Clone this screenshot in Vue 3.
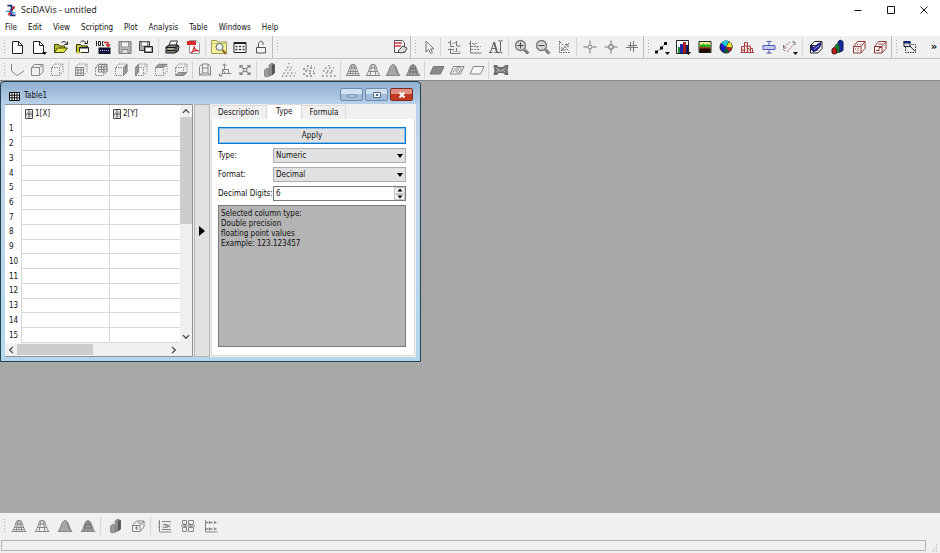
<script setup>
import { ref } from 'vue'

const menus = ['File', 'Edit', 'View', 'Scripting', 'Plot', 'Analysis', 'Table', 'Windows', 'Help']

const dash = 'stroke-dasharray="1.5 1"'
const cubeBack = `<path ${dash} d="M2.500 5.500h8v8h-8zM2.500 5.500l3-3.500h8.500v7.500l-3.500 4M10.500 5.500l3.500-3.500"/>`
const page = '<path fill="#fff" stroke="#222" d="M2.500 2.500h6l4 4v8h-10z"/><path stroke="#222" d="M8.500 2.500v4h4"/>'
const bell = 'M1 13.500C4 11 4 3 8 2.500c4 .5 4 8.500 7 11z'
const mesh = '<path d="M1 13.500C4 11 4.500 3 6.500 2.500h3C11.500 3 12 11 15 13.500M5 13.500L7 2.500M11 13.500L9 2.500M4.500 6h7.500M3.500 9.500h9.500M1 13.500h14"/>'
const lens = '<circle cx="6.500" cy="6.500" r="5" fill="#d4d4d4" stroke="#777" stroke-width="1.300"/><path stroke="#888" stroke-width="3" d="M10.500 10.500l4 4"/><path stroke="#555" d="M10 11.500l3.500 3.500"/>'
const caret = '<path fill="#111" stroke="none" d="M11 13h5l-2.500 3z"/>'
const redCube = '<path fill="#fff6f4" stroke="#8b3a3a" d="M2.500 7.500l4-5h7.500v7l-4 4.500h-7.500zM2.500 7.500h7.500v6M10 7.500l4-5"/>'
const lock3d = '<path fill="#999" stroke="#666" stroke-width=".6"'

const icons = {
  app: '<path stroke="#c03028" stroke-width="3" d="M4 13c3 0 3-9 8-9"/><path stroke="#1b2d7a" stroke-width="2" d="M3 2h6M8 2v11M6 14h7"/><path stroke="#3b86d8" stroke-width="1.500" d="M1 9h5l3 2h4"/>',
  page,
  pageMenu: page + caret,
  open: '<path fill="#b8b832" stroke="#444400" d="M1.500 13.500v-8h4l1 1.500h5v2"/><path fill="#e4e44c" stroke="#444400" d="M1.500 13.500l3-4.500h10l-3.500 4.500z"/><path stroke="#222" d="M8.500 4c1-2 4-2 5 .5M14.500 2.500v3h-3"/>',
  openProject: '<path stroke="#222" d="M6.500 3c1.500-1.500 4-1.500 5.500 1M13.500 1.500v3h-3"/><path fill="#c8c83c" stroke="#333300" d="M2.500 13.500v-8h4l1 1.500h6v2"/><path fill="#fff" stroke="#222" d="M5.500 13.500v-5h9v5z"/><path stroke="#222" d="M5 9h10"/><path stroke="#c8c83c" stroke-width="1.500" d="M2 13.500h5"/>',
  importAscii: '<path stroke="#222" d="M1.500 2v5M3.500 2.500h2v4h-2zM8.500 2.500h-1v4h1.500"/><path stroke="#c43030" stroke-width="1.500" d="M9 3.500h4v3.500M11 5.500l2 2 2-2"/><rect x="4" y="9" width="11" height="5.500" fill="#15154c" stroke="#111"/><path stroke="#aab" stroke-dasharray="1 1" d="M5 11.500h9"/>',
  save: '<path fill="#b5b5b5" stroke="#777" d="M2 2.500h12v12H2z"/><path fill="#f3f3f3" stroke="#999" d="M4.500 3h7v5h-7z"/><path fill="#ddd" stroke="#888" d="M5 10.500h6v4H5z"/>',
  saveProject: '<path fill="#aaa" stroke="#444" d="M1.500 2.500h10v9h-10z"/><path fill="#fff" stroke="#888" d="M3.500 3h6v4h-6z"/><path fill="#999" stroke="#222" d="M6.500 7.500h8v6h-8z"/><path fill="#fff" stroke="none" d="M8 9h5v3H8z"/>',
  print: '<path fill="#fff" stroke="#333" d="M5 7l1.500-5h7l-2 5z"/><path fill="#888" stroke="#111" d="M2 8l3-2h9l1 2-1 4-3 2H2z"/><path stroke="#111" d="M2 8.500h9l3-2M3 11.500h8M12 8v5"/><path stroke="#d6d6a0" d="M4 10h5"/>',
  pdf: '<path fill="#fff" stroke="#999" d="M4.500 1.500h7l3 3v10h-10z"/><path fill="#d92b2b" stroke="none" d="M2 2h9v4H2z"/><path stroke="#d02828" stroke-width="1.200" d="M6 14c2-2 3.500-5 3-7 0 3 2 4.500 5 5-3-1-6 0-8 2z"/>',
  explorer: '<path fill="#f5f39d" stroke="#9c9c4c" d="M.5 14.500v-13h5l1 1.500h9v11.500z"/><path stroke="#c9c870" d="M.5 4.500h15"/><circle cx="8.500" cy="8" r="3.500" fill="#e8f2f4" stroke="#666"/><path stroke="#886622" stroke-width="2" d="M11.500 11l3.500 4"/>',
  results: '<path fill="#fff" stroke="#222" d="M2 3.500h12v10H2z"/><path stroke="#222" stroke-width="2" d="M2 4h12"/><path stroke="#333" stroke-width="1.500" stroke-dasharray="2 1.500" d="M3.500 7.500h9.500M3.500 10.500h9.500"/>',
  lock: '<path fill="#f2f2f2" stroke="#555" d="M3.500 8.500h9v5.500h-9zM5.500 8.500V4.500q2-4 4.500-1v2.500"/>',
  note: '<path fill="#fff" stroke="#555" d="M2.500 1.500h8l2 2v10h-10z"/><path stroke="#cc3c48" stroke-width="1.500" d="M2 4h8M2 7h7"/><path fill="#ddd" stroke="#444" d="M6 12l5-5 4 2-2 4-5 1z"/>',
  cursor: '<path fill="#eee" stroke="#777" d="M5 2v11l2.500-2.500 2 4 2-1-2-3.500h3.500z"/>',
  cross1: '<path stroke="#777" d="M4.500 1.500v6M2 3.500h3M4 7.500h4M4.500 9.500v5h10M10.500 2v5h4M9 3.500h2M10.500 9v3M2 10.500h6"/><path stroke="#999" stroke-dasharray="1.500 1" d="M7 12.500h8M6 4.500h3"/>',
  cross2: '<path stroke="#777" d="M3.500 2v12h11"/><path stroke="#888" stroke-dasharray="2 1" d="M2 4.500h9M4 7.500h10M4 10.500h9M7 5l5 6"/>',
  textCursor: '<path stroke="#666" d="M1 13.500h3.500M6.500 13.500H11M2.500 13L6 3M6 3l3 10.500M4 9.500h4"/><path stroke="#666" stroke-width="1.800" d="M6 3l3 10"/><path stroke="#666" d="M10.500 1.500q2 0 2 1.500v9.500q0 1.500 2 1.500M12.500 3q0-1.500 2-1.500M12.500 12.500q0 1.500-2 1.500"/>',
  zoomIn: lens + '<path stroke="#444" d="M3.500 6.500h6M6.500 3.500v6"/>',
  zoomOut: lens + '<path stroke="#444" d="M3.500 6.500h6"/>',
  rescale: '<path stroke="#666" stroke-dasharray="1.500 1" d="M3.500 2v11.500h11M4 3l9 9M13 4l-8 8"/><path stroke="#777" d="M9 5.500h3v3M6 8v3h4"/>',
  target: '<path stroke="#777" d="M8 1.500v4M8 10.500v4M1.500 8h4M10.500 8h4"/><circle cx="8" cy="8" r="2" stroke="#777"/>',
  targetBox: '<path stroke="#777" d="M8 1.500v5M8 9.500v5M1.500 8h5M9.500 8h5M6 6h4v4H6z"/>',
  cursors: '<path stroke="#777" d="M6.500 3v9M9.500 2v11M2 8.500h12M4 6.500h9"/>',
  line: '<path stroke="#444" stroke-dasharray="2 1" d="M3 13L12 4"/><path fill="#111" stroke="none" d="M1 11.500h3v3H1zM6 7.500h3v3H6zM10 3h3v3h-3z"/>' + caret,
  bars: '<path fill="#fff" stroke="#222" d="M1.500 1.500h12v13h-12z"/><path fill="#178c2a" stroke="none" d="M3 8h2v6H3z"/><path fill="#2026aa" stroke="none" d="M5 5h3v9H5z"/><path fill="#a32020" stroke="none" d="M8 3h3v11H8z"/><path fill="#18185c" stroke="none" d="M11 6h2v8h-2z"/>' + caret,
  area: '<path fill="#f5ee90" stroke="#222" d="M2 2.500h12v11H2z"/><path fill="#17b325" stroke="none" d="M2.500 5l2 1 2-1.500 2 1.500 2-1 3 1v4h-11z"/><path fill="#b33a14" stroke="none" d="M2.500 8l2-1 2 1.500 2-1 2 1 3-1v3h-11z"/><path fill="#210606" stroke="none" d="M2.500 9.500h11v4h-11z"/>',
  pie: '<circle cx="8" cy="8" r="6" fill="#1a22c0" stroke="#111"/><path fill="#20c8d8" stroke="none" d="M8 8L3.500 4A6 6 0 0 1 11 2.500z"/><path fill="#eeee24" stroke="#222" stroke-width=".5" d="M8 8l3-5.500A6 6 0 0 1 14 9z"/><path fill="#b81e1e" stroke="none" d="M8 8l6 1a6 6 0 0 1-3 4z"/><path fill="#125c1c" stroke="none" d="M8 8l3 5a6 6 0 0 1-5 .5z"/>',
  vectors: '<path fill="#f4d8d4" stroke="#a84444" d="M2.500 13.500v-6h3v6M5.500 13.500v-10h3v10M8.500 13.500V7h3v6.500M11.500 9.500h2v4M1.500 13.500H15M3 10l2 2M6 6l2 2M9 9l2 2"/>',
  box: '<path fill="#c8c8f5" stroke="#5058b0" d="M2 6.500h12v4H2zM8 2v4M8 11v3.500M5.500 2.500h5M5.500 14h5"/>',
  vectorLines: '<path stroke="#b06060" stroke-dasharray="2 1" d="M2 8l6-5M5 13l8-9"/><path stroke="#777" d="M1 10l2 2M10 3h3v3M1.500 6v3h3"/>' + caret,
  surf3d: '<path fill="#fff" stroke="#222" d="M2.500 6.500l4-4H14v7l-4 4.500H2.500z"/><path fill="#2a2aa8" stroke="#15155c" d="M3 7l3 1.500 3-3 4-2-1 4-3 4-4 1-2-3z"/><path stroke="#8c8ce8" d="M6 10.500l5-4"/><path stroke="#222" d="M2.500 6.500h5"/>',
  bars3d: '<path fill="#1a2c9c" stroke="#111a5c" d="M9 3l2-2 3 1.500v9L11 13H9z"/><path fill="#178830" stroke="#115c1c" d="M6 6.500L8 5l2 1.500v7H6z"/><path fill="#bb2222" stroke="#5c1111" d="M3 10l2-1.500L7.500 10v4.500l-3 .5L3 14z"/>',
  scatter3d: redCube + '<path stroke="#8b3a3a" stroke-dasharray="1 1.500" d="M4 10h5M6 5.500h6M7 8.500v4"/>',
  traj3d: redCube + '<path stroke="#8b3a3a" d="M4 11.500h3v-3h3M6.500 5h4"/>',
  layer: '<path fill="#ddd" stroke="#223" d="M2 2.500h6v5H2z"/><path fill="#18287c" stroke="none" d="M1.500 2h7v2.500h-7z"/><path stroke="#333" stroke-dasharray="1.500 1" d="M3.500 8v5.500h10v-8H9"/><path stroke="#222" d="M8 7l5 5.500"/>',
  axesNone: '<path d="M2.500 2v7L8 13.500 15 9"/>',
  cube: '<path d="M2.500 5.500h8v8h-8zM2.500 5.500l3-3h8.500v7.500l-3.500 3.500M10.500 5.500l3.500-3"/>',
  cubeDash: cubeBack,
  gridFront: cubeBack + '<path d="M2.500 5.500h8v8h-8zM5 5.500v8M8 5.500v8M2.500 8h8M2.500 11h8"/>',
  gridBack: cubeBack + '<path d="M5.500 2.500h8.500v7.500H5.500zM8.500 2.500V10M11 2.500V10M5.500 5H14M5.500 7.500H14"/>',
  gridRight: cubeBack + '<path fill="#aaa" d="M10.500 5.500L14 2.500V10l-3.500 3.500zM12.500 4v8"/>',
  gridLeft: cubeBack + '<path fill="#aaa" d="M2.500 5.500l3-3V10l-3 3.500zM4 4v8"/>',
  gridTop: cubeBack + '<path fill="#bbb" d="M2.500 5.500l3-3H14l-3.500 3zM4 4h8.500M8 5.500l3-3"/>',
  gridBottom: cubeBack + '<path fill="#bbb" d="M2.500 13.500l3-3H14l-3.500 3zM4 12h8.500M8 13.500l3-3"/>',
  perspective: '<path d="M2.500 4.500l3-2.500h5.500l2.500 2.500v8.500h-11zM5.500 2v9H11V2M5.500 6h5.500M2.500 13l3-2M11 11l2.500 2"/>',
  resetRot: '<path d="M7.500 2v5M5.500 3.500l2-1.500 2 1.500M5.500 7.500h6v4h-6zM5.500 11.500L2.500 14M2.500 11.500V14h3M11.500 11.500h3M5.500 7.500l3 4"/>',
  fit: '<path stroke-width="1.200" d="M3 3.500l3.500 3M13 3.500l-3.500 3M3 12.500l3.500-3M13 12.500l-3.500-3M3 6V3.500h3M10 3.500h3V6M3 10v2.500h3M10 12.500h3V10M6.500 6.500h3v3h-3z"/>',
  barStyle: lock3d + ' d="M8 3l3-2 2.500 1.500V11L10 13.500 8 14z"/><path fill="#555" stroke="#555" stroke-width=".6" d="M11 3v10l2.500-2V2.500z"/>' + lock3d + ' d="M3.500 8L6 6l2.500 2v6L5 15l-1.500-1z"/>',
  dots: '<path stroke-width="1.300" stroke-dasharray="1.300 2.500" d="M8 1v4M6 5.500h5M4.500 8h8M2.500 11h12M1 14h15"/>',
  cones: '<path stroke-width="1.300" stroke-dasharray="2 2" d="M6 4h5M2 7h5M9 6h5M4 9h9M2 12h4M8 11.500h6M5 14h6"/>',
  crosses: '<path stroke-width="1.300" stroke-dasharray="1.500 2.500" d="M8 3v3M4 6h9M2 9h12M5 11h8M1 14h14"/>',
  meshHidden: mesh + '<path stroke-width=".8" d="M8 3v10M2.500 11.500h11"/>',
  mesh,
  bell: `<path fill="#a6a6a6" d="${bell}"/><path stroke="#777" d="M9 3c2 1 2.500 7 4 9"/>`,
  bellMesh: `<path fill="#a6a6a6" d="${bell}"/><path stroke="#666" stroke-width=".8" d="M6 4L4.500 13M8 2.500V13M10 4l1.500 9M5 6.500h6M4 10h8.500"/>`,
  floorFull: '<path fill="#8a8a8a" stroke="#777" d="M1 12l3.500-7.500H15L11.500 12z"/>',
  floorIso: '<path d="M1 12l3.500-7.500H15L11.500 12zM4 10.500c2-6 9-6 8-3-1 4-5 3-5 1.500s3-2 3-.5"/>',
  floorNone: '<path fill="#f6f6f6" d="M1 12l3.500-7.500H15L11.500 12z"/>',
  animate: '<path fill="#777" stroke="#666" d="M1 3.500h3l2 2h4l2-2h3l-1 5 1 4h-3l-2-2H6l-2 2H1l1-4z"/><path stroke="#bbb" stroke-width=".8" d="M3 6l3 3h3l4-3M4 10l2-3M9 7l3 3"/>',
  contour: '<path d="M2.500 2v12h12M1 5h2M1 9h2M5 3.500h9M5 11.500h9M5.500 7q2-2 4 0t4-1M5.500 9q2 1.500 4 0t4 0"/><circle cx="9.500" cy="8" r="1.500"/>',
  matrixPlot: '<path d="M2.500 2.500h4v4h-4zM8.500 2.500h5v4h-5zM2.500 9.500h4v4h-4zM8.500 9.500h5v4h-5zM4 5l2 5M9 5l3 5M1 8h14"/>',
  layers: '<path d="M2.500 2v12h12"/><path stroke-width="1.500" stroke-dasharray="2.500 1.500" d="M3 4.500h11M3 11h11"/><path d="M6.500 3v3M11.500 3v3M6.500 9.500v3M11.500 9.500v3"/>',
  scatterGray: '<path d="M2.500 7.500l4-4.500h7.500v6l-4 4.500h-7.500zM2.500 7.500h7.500v6M10 7.500l4-4.500M5 10h3M6.500 8v4M8 5h3"/>'
}

const mainBars = [
  { name: 'file', groups: [['page', 'pageMenu', 'open', 'openProject', 'importAscii', 'save', 'saveProject'], ['print', 'pdf'], ['explorer', 'results', 'lock']] },
  { name: 'edit', groups: [['note']] },
  { name: 'tools', groups: [['cursor'], ['cross1', 'cross2', 'textCursor'], ['zoomIn', 'zoomOut', 'rescale'], ['target', 'targetBox', 'cursors']] },
  { name: 'plot', groups: [['line', 'bars', 'area', 'pie', 'vectors', 'box', 'vectorLines'], ['surf3d', 'bars3d', 'scatter3d', 'traj3d']] },
  { name: 'layer', groups: [['layer']] }
]

const surfaceGroups = [
  ['axesNone', 'cube', 'cubeDash'],
  ['gridFront', 'gridBack', 'gridRight', 'gridLeft', 'gridTop', 'gridBottom'],
  ['perspective', 'resetRot', 'fit'],
  ['barStyle', 'dots', 'cones', 'crosses'],
  ['meshHidden', 'mesh', 'bell', 'bellMesh'],
  ['floorFull', 'floorIso', 'floorNone'],
  ['animate']
]

const matrixGroups = [
  ['meshHidden', 'mesh', 'bell', 'bellMesh'],
  ['barStyle', 'scatterGray'],
  ['contour', 'matrixPlot', 'layers']
]

const pitch = 21.4
const groupWidth = (group) => ({ width: Math.round(group.length * pitch) + 'px' })

const tabs = ['Description', 'Type', 'Formula']
const activeTab = ref('Type')
const type = ref('Numeric')
const format = ref('Decimal')
const digits = ref(6)
</script>

<template>
  <div class="app">
    <header class="titlebar">
      <svg class="logo" viewBox="0 0 16 16" v-html="icons.app"></svg>
      <h1>SciDAVis - untitled</h1>
      <div class="window-buttons">
        <button type="button" aria-label="Minimize"><svg viewBox="0 0 10 10"><path d="M1.500 5.500h7" /></svg></button>
        <button type="button" aria-label="Maximize"><svg viewBox="0 0 10 10"><path d="M1.500 1.500h7v7h-7z" /></svg></button>
        <button type="button" aria-label="Close"><svg viewBox="0 0 10 10"><path d="M1.500 1.500l7 7M8.500 1.500l-7 7" /></svg></button>
      </div>
    </header>

    <nav class="menubar">
      <button v-for="m in menus" :key="m" type="button">{{ m }}</button>
    </nav>

    <div class="bar-row main-row">
      <div v-for="bar in mainBars" :key="bar.name" class="toolbar" :class="bar.name">
        <span class="grip"></span>
        <div v-for="(group, g) in bar.groups" :key="g" class="group" :style="groupWidth(group)">
          <button v-for="i in group" :key="i" type="button" :aria-label="i">
            <svg viewBox="0 0 16 16" v-html="icons[i]"></svg>
          </button>
        </div>
        <button v-if="bar.name === 'layer'" type="button" class="more">»</button>
      </div>
    </div>

    <div class="bar-row surface-row">
      <div class="toolbar disabled">
        <span class="grip"></span>
        <div v-for="(group, g) in surfaceGroups" :key="g" class="group">
          <button v-for="i in group" :key="i" type="button" :aria-label="i">
            <svg viewBox="0 0 16 16" v-html="icons[i]"></svg>
          </button>
        </div>
      </div>
    </div>

    <main class="workspace">
      <section class="subwindow">
        <div class="sub-title">
          <svg class="table-icon" viewBox="0 0 11 9"><path fill="#fff" stroke="#111" d="M.5.5h10v8H.5zM3 0v9M5.500 0v9M8 0v9M0 3.200h11M0 5.800h11" /></svg>
          <h2>Table1</h2>
          <div class="sub-buttons">
            <button type="button" aria-label="Minimize table"><svg viewBox="0 0 10 8"><path fill="#fff" stroke="#63809f" d="M1 4h8v2H1z" /></svg></button>
            <button type="button" aria-label="Maximize table"><svg viewBox="0 0 10 8"><path fill="#fff" stroke="#4e6a88" d="M1.500 1.500h7v5h-7zM4 3.500h2v1H4z" /></svg></button>
            <button type="button" class="close" aria-label="Close table"><svg viewBox="0 0 10 8"><path stroke="#fff" stroke-width="2" d="M2.500 1.500l5 5M7.500 1.500l-5 5" /></svg></button>
          </div>
        </div>

        <div class="sub-body">
          <div class="sheet">
            <table>
              <thead>
                <tr>
                  <td class="corner"></td>
                  <th v-for="c in ['1[X]', '2[Y]']" :key="c" scope="col">
                    <span class="col-head">
                      <svg viewBox="0 0 8 10"><path d="M.5.5h7v9h-7zM4 .5v9M.5 5h7" /><path stroke-width=".6" d="M2 3h1M5 3h2M2 7h1M5 7h2" /></svg>{{ c }}
                    </span>
                  </th>
                </tr>
              </thead>
              <tbody>
                <tr v-for="r in 15" :key="r">
                  <th scope="row">{{ r }}</th>
                  <td></td>
                  <td></td>
                </tr>
              </tbody>
            </table>
            <div class="scroll vertical">
              <svg viewBox="0 0 8 8"><path d="M1.500 5.500L4 3l2.500 2.500" /></svg>
              <span class="track"><span class="thumb"></span></span>
              <svg viewBox="0 0 8 8"><path d="M1.500 2.500L4 5l2.500-2.500" /></svg>
            </div>
            <div class="scroll horizontal">
              <svg viewBox="0 0 8 8"><path d="M5.500 1.500L3 4l2.500 2.500" /></svg>
              <span class="track"><span class="thumb"></span></span>
              <svg viewBox="0 0 8 8"><path d="M2.500 1.500L5 4 2.500 6.500" /></svg>
            </div>
            <span class="scroll-corner"></span>
          </div>

          <button type="button" class="collapse" aria-label="Toggle column panel">
            <svg viewBox="0 0 6 10"><path d="M0 0l6 5-6 5z" /></svg>
          </button>

          <div class="side">
            <div class="tabs" role="tablist">
              <button
                v-for="t in tabs"
                :key="t"
                type="button"
                role="tab"
                :aria-selected="t === activeTab"
                :class="{ active: t === activeTab }"
                @click="activeTab = t"
              >{{ t }}</button>
            </div>
            <form class="panel" @submit.prevent>
              <button type="submit" class="apply">Apply</button>
              <div class="fields">
                <label for="type">Type:</label>
                <span class="select"><select id="type" v-model="type"><option>Numeric</option></select></span>
                <label for="format">Format:</label>
                <span class="select"><select id="format" v-model="format"><option>Decimal</option></select></span>
                <label for="digits">Decimal Digits:</label>
                <span class="spin">
                  <input id="digits" v-model.number="digits" type="number" min="0" max="16" />
                  <span class="steps">
                    <button type="button" aria-label="Increase" @click="digits++"><svg viewBox="0 0 6 4"><path d="M3 .5L5.500 3.500h-5z" /></svg></button>
                    <button type="button" aria-label="Decrease" @click="digits--"><svg viewBox="0 0 6 4"><path d="M3 3.500L5.500.5h-5z" /></svg></button>
                  </span>
                </span>
              </div>
              <p class="info">
                Selected column type:<br />Double precision<br />floating point values<br />Example: 123.123457
              </p>
            </form>
          </div>
        </div>
      </section>
    </main>

    <div class="bar-row matrix-row">
      <div class="toolbar disabled">
        <span class="grip"></span>
        <div v-for="(group, g) in matrixGroups" :key="g" class="group">
          <button v-for="i in group" :key="i" type="button" :aria-label="i">
            <svg viewBox="0 0 16 16" v-html="icons[i]"></svg>
          </button>
        </div>
      </div>
    </div>

    <footer class="statusbar">
      <span class="status-box"></span>
      <svg class="size-grip" viewBox="0 0 8 8"><path d="M6 1h1M4 4h1M6 4h1M2 7h1M4 7h1M6 7h1" /></svg>
    </footer>
  </div>
</template>

<style>
body {
  background: #f0f0f0;
}
</style>

<style scoped>
.app {
  display: flex;
  flex-direction: column;
  min-height: 100vh;
  background: #f0f0f0;
  color: #111;
  font-family: "DejaVu Sans Condensed", "DejaVu Sans", "Noto Sans", sans-serif;
  font-size: 8px;
  line-height: 10px;
}
* {
  box-sizing: border-box;
}
button,
input,
select {
  margin: 0;
  padding: 0;
  border: 0;
  border-radius: 0;
  background: none;
  color: inherit;
  font: inherit;
}
h1,
h2,
p {
  margin: 0;
  font-size: inherit;
  font-weight: normal;
}
svg {
  display: block;
  fill: none;
  stroke: currentColor;
}

.titlebar {
  display: flex;
  align-items: center;
  gap: 3px;
  height: 20px;
  padding-left: 5px;
  background: #fff;
}
.logo {
  width: 13px;
  height: 13px;
}
.titlebar h1 {
  flex: 1;
  font-family: "Open Sans", "Noto Sans", sans-serif;
  font-size: 9px;
}
.window-buttons {
  display: flex;
}
.window-buttons button {
  display: grid;
  place-items: center;
  width: 33px;
  height: 20px;
}
.window-buttons svg {
  width: 10px;
  height: 10px;
}

.menubar {
  display: flex;
  gap: 11px;
  height: 16px;
  padding-left: 5px;
  background: #fff;
}

.bar-row {
  display: flex;
}
.main-row {
  height: 23px;
  border-bottom: 1px solid #c4c4c4;
}
.surface-row {
  height: 21px;
}
.matrix-row {
  height: 26px;
}
.toolbar {
  display: flex;
  align-items: center;
}
.main-row .toolbar + .toolbar {
  border-left: 1px solid #bdbdbd;
}
.toolbar.edit {
  flex: 1;
}
.toolbar.edit .group {
  margin-left: auto;
}
.grip {
  width: 7px;
  height: 16px;
  background: radial-gradient(circle, #b2b2b2 1px, transparent 1px) 3px 0 / 3px 3px repeat-y;
}
.group {
  display: flex;
}
.group + .group {
  box-sizing: content-box;
  margin-left: 1px;
  padding-left: 2px;
  border-left: 1px solid #d4d4d4;
}
.group button {
  display: grid;
  place-items: center;
  flex: 1;
  min-width: 20px;
  height: 18px;
}
.group svg {
  width: 16px;
  height: 16px;
}
.matrix-row .group button {
  min-width: 23px;
}
.disabled {
  color: #868686;
}
.more {
  width: 12px;
  margin-left: 8px;
  font-size: 11px;
  font-weight: bold;
}

.workspace {
  display: flex;
  flex: 1;
  align-items: flex-start;
  border-top: 1px solid #8a8a8a;
  background: #a8a8a8;
}
.subwindow {
  display: flex;
  flex-direction: column;
  width: 421px;
  padding: 0 4px 4px;
  border: 1px solid #23424f;
  border-radius: 4px 4px 0 0;
  background: linear-gradient(#8fb0d0, #b9d1ea 22px, #c3d5ea 70px, #b2d8ee);
}
.sub-title {
  display: flex;
  align-items: center;
  gap: 4px;
  height: 22px;
  padding: 6px 0 0 4px;
}
.table-icon {
  width: 11px;
  height: 9px;
}
.sub-title h2 {
  flex: 1;
}
.sub-buttons {
  display: flex;
  align-self: flex-start;
  gap: 2px;
  padding-right: 3px;
}
.sub-buttons button {
  display: grid;
  place-items: center;
  width: 23px;
  height: 13px;
  border: 1px solid #6f8cab;
  border-radius: 2px;
  background: linear-gradient(#cfe0f1 45%, #9fbddb 50%);
}
.sub-buttons .close {
  border-color: #7c2a20;
  background: linear-gradient(#e09080 45%, #c23a22 50%);
}
.sub-buttons svg {
  width: 10px;
  height: 8px;
}
.sub-body {
  display: flex;
  height: 253px;
  background: #f0f0f0;
}

.sheet {
  display: grid;
  grid-template: 1fr 13px / 1fr 12px;
  width: 188px;
  border: 1px solid #8e9299;
  border-left: 0;
  background: #fff;
}
table {
  width: 100%;
  height: 100%;
  border-spacing: 0;
  table-layout: fixed;
}
td,
th {
  padding: 0;
  border: solid #d8d8d8;
  border-width: 0 0 1px 1px;
  font-weight: normal;
  text-align: left;
}
thead tr {
  height: 17px;
}
thead th,
thead .corner {
  border-bottom: 0;
}
.corner,
tbody th {
  width: 16px;
  border: 0;
}
tbody th {
  padding-left: 4px;
}
thead th:nth-child(2) {
  width: 88px;
}
.col-head {
  display: flex;
  align-items: center;
  gap: 2px;
  padding-left: 3px;
}
.col-head svg {
  width: 8px;
  height: 10px;
  stroke: #444;
}
.scroll {
  display: flex;
  align-items: center;
  background: #f0f0f0;
}
.scroll.vertical {
  flex-direction: column;
}
.scroll svg {
  flex: none;
  width: 12px;
  height: 12px;
  padding: 1px;
  stroke: #444;
}
.track {
  flex: 1;
  display: flex;
  align-self: stretch;
}
.vertical .track {
  flex-direction: column;
}
.thumb {
  background: #cdcdcd;
}
.vertical .thumb {
  height: 50%;
}
.horizontal .thumb {
  width: 50%;
  margin: 1px 0;
}
.scroll-corner {
  background: #f0f0f0;
}

.collapse {
  display: grid;
  place-items: center;
  width: 16px;
  margin-left: 1px;
  border: 1px solid #b4b4b4;
  background: #e1e1e1;
}
.collapse svg {
  width: 6px;
  height: 10px;
  fill: #000;
  stroke: none;
}

.side {
  flex: 1;
  display: flex;
  flex-direction: column;
  padding: 0 1px 1px;
}
.tabs {
  display: flex;
  align-items: flex-end;
  height: 15px;
}
.tabs button {
  height: 14px;
  padding: 0 7px;
  border: solid #d9d9d9;
  border-width: 1px 1px 0 0;
}
.tabs .active {
  height: 15px;
  padding: 0 9px;
  background: #fff;
}
.panel {
  flex: 1;
  display: flex;
  flex-direction: column;
  padding: 8px 8px 8px 6px;
  border: 1px solid #dcdcdc;
  border-top: 0;
  background: #fff;
}
.apply {
  height: 17px;
  border: 1px solid #0078d7;
  background: #e1e1e1;
  box-shadow: inset 0 0 0 1px #8fbfe6;
}
.fields {
  display: grid;
  grid-template-columns: 55px 1fr;
  grid-auto-rows: 15px;
  align-items: stretch;
  row-gap: 4px;
  margin: 4px 0;
}
.fields label {
  align-self: center;
  white-space: nowrap;
}
.select {
  position: relative;
  display: flex;
}
.select::after {
  content: "";
  position: absolute;
  top: 6px;
  right: 3px;
  border: 3px solid transparent;
  border-top: 4px solid #000;
  border-bottom: 0;
  pointer-events: none;
}
.select select {
  appearance: none;
  width: 100%;
  padding-left: 2px;
  border: 1px solid #adadad;
  background: #e1e1e1;
}
.spin {
  display: flex;
  border: 1px solid #7a7a7a;
  background: #fff;
}
.spin input {
  flex: 1;
  min-width: 0;
  padding-left: 2px;
  appearance: textfield;
}
.steps {
  display: flex;
  flex-direction: column;
}
.steps button {
  display: grid;
  place-items: center;
  flex: 1;
  width: 11px;
  border: 1px solid #c8c8c8;
  background: #f0f0f0;
}
.steps svg {
  width: 6px;
  height: 4px;
  fill: #000;
  stroke: none;
}
.info {
  flex: 1;
  padding: 3px 2px;
  border: 1px solid #7a7a7a;
  background: #b4b4b4;
}

.statusbar {
  display: flex;
  align-items: center;
  gap: 4px;
  height: 14px;
  padding: 0 2px 1px 1px;
}
.status-box {
  flex: 1;
  height: 11px;
  border: 1px solid #b4b4b4;
}
.size-grip {
  align-self: flex-end;
  width: 8px;
  height: 8px;
  stroke: #aaa;
}
</style>
